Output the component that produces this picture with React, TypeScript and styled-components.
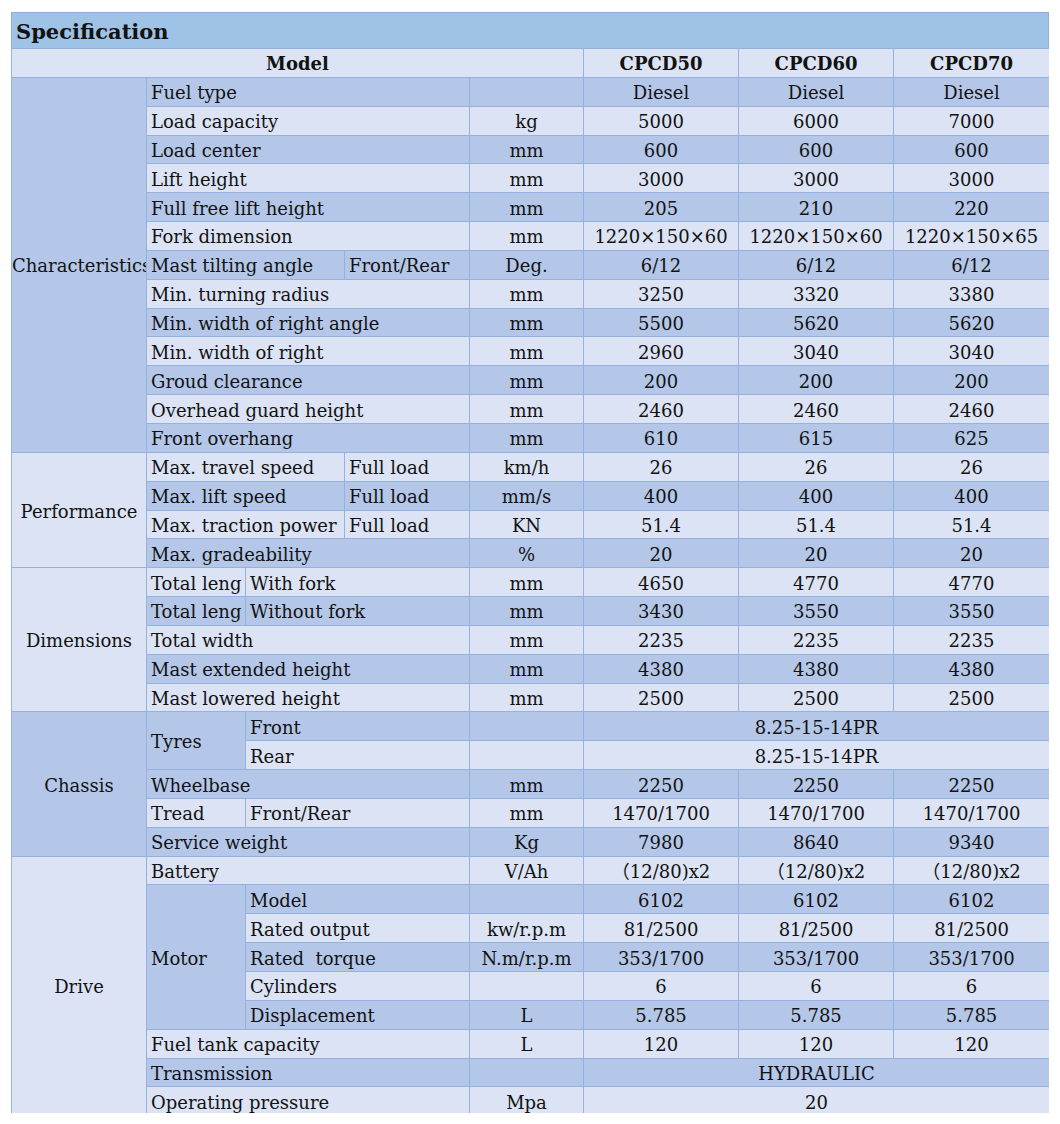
import React from 'react';
import styled, { createGlobalStyle } from 'styled-components';

const GlobalStyle = createGlobalStyle`
  html, body {
    margin: 0;
    padding: 0;
    background: #ffffff;
  }
  body {
    font-family: "DejaVu Serif", "Noto Sans CJK SC", "Liberation Serif", serif;
    color: #121212;
  }
`;

const Sheet = styled.div`
  width: 1038px;
  margin: 12px 0 0 11px;
  height: 1101px;
  overflow: hidden;
`;

const Title = styled.div`
  height: 36px;
  box-sizing: border-box;
  background: #9fc3e7;
  border: 1px solid #8fb0de;
  border-bottom: none;
  padding: 6px 0 0 4px;
  font-size: 21px;
  font-weight: 700;
  line-height: 1.2;
`;

const Table = styled.table`
  width: 1038px;
  border-collapse: collapse;
  table-layout: fixed;
  font-size: 18px;
`;

const Row = styled.tr<{ $dark?: boolean }>`
  height: 28.85px;
  background: ${(p) => (p.$dark ? '#b4c7e8' : '#dbe3f4')};
`;

const Cell = styled.td<{ $align?: 'left' | 'center'; $bold?: boolean; $bg?: 'dark' | 'light' }>`
  border: 1px solid #93b2e0;
  padding: 3px 4px 0;
  text-align: ${(p) => p.$align || 'center'};
  font-weight: ${(p) => (p.$bold ? 700 : 400)};
  white-space: nowrap;
  overflow: hidden;
  vertical-align: middle;
  line-height: 1;
  background: ${(p) => (p.$bg === 'dark' ? '#b4c7e8' : p.$bg === 'light' ? '#dbe3f4' : 'transparent')};
`;

const Group = styled(Cell)`
  padding: 3px 0 0;
  text-overflow: clip;
`;

const Label = styled(Cell).attrs({ $align: 'left' as const })`
  padding-right: 0;
`;

const Vals = ({ v }: { v: string[] }) => (
  <>
    {v.map((x, i) => (
      <Cell key={i}>{x}</Cell>
    ))}
  </>
);

const App: React.FC = () => {
  return (
    <>
      <GlobalStyle />
      <Sheet>
        <Title>Specification</Title>
        <Table>
          <colgroup>
            <col style={{ width: 135 }} />
            <col style={{ width: 99 }} />
            <col style={{ width: 99 }} />
            <col style={{ width: 125 }} />
            <col style={{ width: 114 }} />
            <col style={{ width: 155 }} />
            <col style={{ width: 155 }} />
            <col style={{ width: 156 }} />
          </colgroup>
          <tbody>
            <Row>
              <Cell colSpan={5} $bold>Model</Cell>
              <Cell $bold>CPCD50</Cell>
              <Cell $bold>CPCD60</Cell>
              <Cell $bold>CPCD70</Cell>
            </Row>

            {/* Characteristics */}
            <Row $dark>
              <Group rowSpan={13} $bg="dark" $align="left">Characteristics</Group>
              <Label colSpan={3}>Fuel type</Label>
              <Cell />
              <Vals v={['Diesel', 'Diesel', 'Diesel']} />
            </Row>
            <Row>
              <Label colSpan={3}>Load capacity</Label>
              <Cell>kg</Cell>
              <Vals v={['5000', '6000', '7000']} />
            </Row>
            <Row $dark>
              <Label colSpan={3}>Load center</Label>
              <Cell>mm</Cell>
              <Vals v={['600', '600', '600']} />
            </Row>
            <Row>
              <Label colSpan={3}>Lift height</Label>
              <Cell>mm</Cell>
              <Vals v={['3000', '3000', '3000']} />
            </Row>
            <Row $dark>
              <Label colSpan={3}>Full free lift height</Label>
              <Cell>mm</Cell>
              <Vals v={['205', '210', '220']} />
            </Row>
            <Row>
              <Label colSpan={3}>Fork dimension</Label>
              <Cell>mm</Cell>
              <Vals v={['1220×150×60', '1220×150×60', '1220×150×65']} />
            </Row>
            <Row $dark>
              <Label colSpan={2}>Mast tilting angle</Label>
              <Label>Front/Rear</Label>
              <Cell>Deg.</Cell>
              <Vals v={['6/12', '6/12', '6/12']} />
            </Row>
            <Row>
              <Label colSpan={3}>Min. turning radius</Label>
              <Cell>mm</Cell>
              <Vals v={['3250', '3320', '3380']} />
            </Row>
            <Row $dark>
              <Label colSpan={3}>Min. width of right angle</Label>
              <Cell>mm</Cell>
              <Vals v={['5500', '5620', '5620']} />
            </Row>
            <Row>
              <Label colSpan={3}>Min. width of right</Label>
              <Cell>mm</Cell>
              <Vals v={['2960', '3040', '3040']} />
            </Row>
            <Row $dark>
              <Label colSpan={3}>Groud clearance</Label>
              <Cell>mm</Cell>
              <Vals v={['200', '200', '200']} />
            </Row>
            <Row>
              <Label colSpan={3}>Overhead guard height</Label>
              <Cell>mm</Cell>
              <Vals v={['2460', '2460', '2460']} />
            </Row>
            <Row $dark>
              <Label colSpan={3}>Front overhang</Label>
              <Cell>mm</Cell>
              <Vals v={['610', '615', '625']} />
            </Row>

            {/* Performance */}
            <Row>
              <Group rowSpan={4} $bg="light">Performance</Group>
              <Label colSpan={2}>Max. travel speed</Label>
              <Label>Full load</Label>
              <Cell>km/h</Cell>
              <Vals v={['26', '26', '26']} />
            </Row>
            <Row $dark>
              <Label colSpan={2}>Max. lift speed</Label>
              <Label>Full load</Label>
              <Cell>mm/s</Cell>
              <Vals v={['400', '400', '400']} />
            </Row>
            <Row>
              <Label colSpan={2}>Max. traction power</Label>
              <Label>Full load</Label>
              <Cell>KN</Cell>
              <Vals v={['51.4', '51.4', '51.4']} />
            </Row>
            <Row $dark>
              <Label colSpan={3}>Max. gradeability</Label>
              <Cell>%</Cell>
              <Vals v={['20', '20', '20']} />
            </Row>

            {/* Dimensions */}
            <Row>
              <Group rowSpan={5} $bg="light">Dimensions</Group>
              <Label>Total leng</Label>
              <Label colSpan={2}>With fork</Label>
              <Cell>mm</Cell>
              <Vals v={['4650', '4770', '4770']} />
            </Row>
            <Row $dark>
              <Label>Total leng</Label>
              <Label colSpan={2}>Without fork</Label>
              <Cell>mm</Cell>
              <Vals v={['3430', '3550', '3550']} />
            </Row>
            <Row>
              <Label colSpan={3}>Total width</Label>
              <Cell>mm</Cell>
              <Vals v={['2235', '2235', '2235']} />
            </Row>
            <Row $dark>
              <Label colSpan={3}>Mast extended height</Label>
              <Cell>mm</Cell>
              <Vals v={['4380', '4380', '4380']} />
            </Row>
            <Row>
              <Label colSpan={3}>Mast lowered height</Label>
              <Cell>mm</Cell>
              <Vals v={['2500', '2500', '2500']} />
            </Row>

            {/* Chassis */}
            <Row $dark>
              <Group rowSpan={5} $bg="dark">Chassis</Group>
              <Label rowSpan={2} $bg="dark">Tyres</Label>
              <Label colSpan={2}>Front</Label>
              <Cell />
              <Cell colSpan={3}>8.25-15-14PR</Cell>
            </Row>
            <Row>
              <Label colSpan={2}>Rear</Label>
              <Cell />
              <Cell colSpan={3}>8.25-15-14PR</Cell>
            </Row>
            <Row $dark>
              <Label colSpan={3}>Wheelbase</Label>
              <Cell>mm</Cell>
              <Vals v={['2250', '2250', '2250']} />
            </Row>
            <Row>
              <Label>Tread</Label>
              <Label colSpan={2}>Front/Rear</Label>
              <Cell>mm</Cell>
              <Vals v={['1470/1700', '1470/1700', '1470/1700']} />
            </Row>
            <Row $dark>
              <Label colSpan={3}>Service weight</Label>
              <Cell>Kg</Cell>
              <Vals v={['7980', '8640', '9340']} />
            </Row>

            {/* Drive */}
            <Row>
              <Group rowSpan={9} $bg="light">Drive</Group>
              <Label colSpan={3}>Battery</Label>
              <Cell>V/Ah</Cell>
              <Vals v={['（12/80)x2', '（12/80)x2', '（12/80)x2']} />
            </Row>
            <Row $dark>
              <Label rowSpan={5} $bg="dark">Motor</Label>
              <Label colSpan={2}>Model</Label>
              <Cell />
              <Vals v={['6102', '6102', '6102']} />
            </Row>
            <Row>
              <Label colSpan={2}>Rated output</Label>
              <Cell>kw/r.p.m</Cell>
              <Vals v={['81/2500', '81/2500', '81/2500']} />
            </Row>
            <Row $dark>
              <Label colSpan={2}>Rated&nbsp; torque</Label>
              <Cell>N.m/r.p.m</Cell>
              <Vals v={['353/1700', '353/1700', '353/1700']} />
            </Row>
            <Row>
              <Label colSpan={2}>Cylinders</Label>
              <Cell />
              <Vals v={['6', '6', '6']} />
            </Row>
            <Row $dark>
              <Label colSpan={2}>Displacement</Label>
              <Cell>L</Cell>
              <Vals v={['5.785', '5.785', '5.785']} />
            </Row>
            <Row>
              <Label colSpan={3}>Fuel tank capacity</Label>
              <Cell>L</Cell>
              <Vals v={['120', '120', '120']} />
            </Row>
            <Row $dark>
              <Label colSpan={3}>Transmission</Label>
              <Cell />
              <Cell colSpan={3}>HYDRAULIC</Cell>
            </Row>
            <Row>
              <Label colSpan={3}>Operating pressure</Label>
              <Cell>Mpa</Cell>
              <Cell colSpan={3}>20</Cell>
            </Row>
          </tbody>
        </Table>
      </Sheet>
    </>
  );
};

export default App;
